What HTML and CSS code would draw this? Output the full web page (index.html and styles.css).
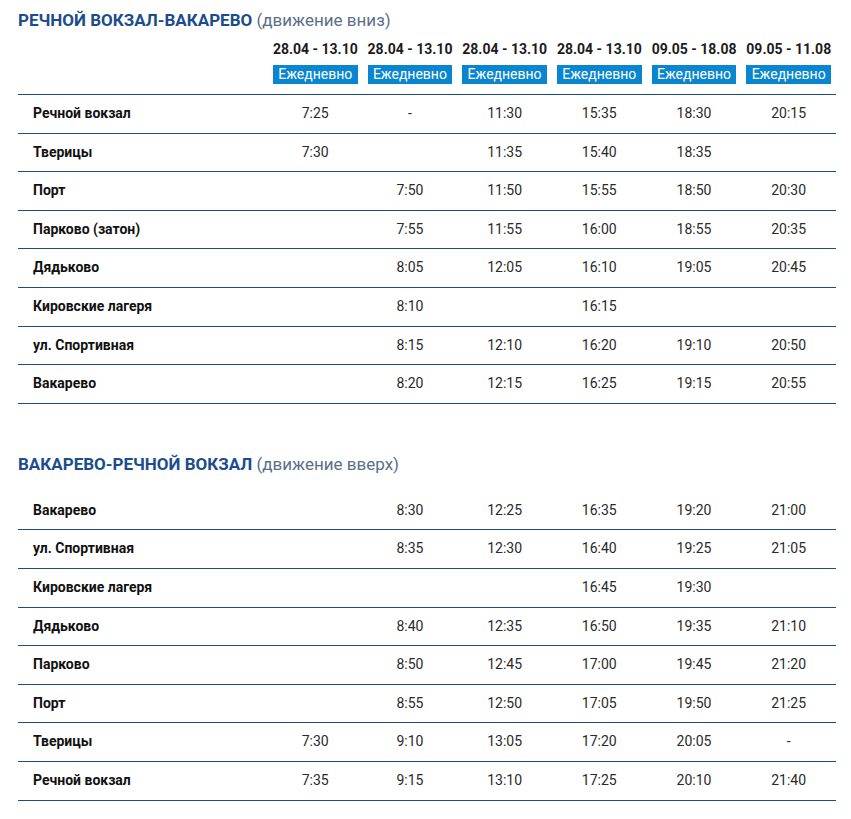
FILE: index.html
```
<!DOCTYPE html>
<html lang="ru">
<head>
<meta charset="utf-8">
<title>Расписание</title>
<link rel="stylesheet" href="styles.css">
</head>
<body>
<div class="page">
  <h2 class="route">РЕЧНОЙ ВОКЗАЛ-ВАКАРЕВО <span class="dir">(движение вниз)</span></h2>
  <table class="sched">
    <colgroup><col class="c-stop"><col><col><col><col><col><col></colgroup>
    <thead>
      <tr>
        <th class="stop"></th>
        <th><div class="date">28.04 - 13.10</div><div class="badge">Ежедневно</div></th>
        <th><div class="date">28.04 - 13.10</div><div class="badge">Ежедневно</div></th>
        <th><div class="date">28.04 - 13.10</div><div class="badge">Ежедневно</div></th>
        <th><div class="date">28.04 - 13.10</div><div class="badge">Ежедневно</div></th>
        <th><div class="date">09.05 - 18.08</div><div class="badge">Ежедневно</div></th>
        <th><div class="date">09.05 - 11.08</div><div class="badge">Ежедневно</div></th>
      </tr>
    </thead>
    <tbody>
      <tr><td class="stop">Речной вокзал</td><td>7:25</td><td>-</td><td>11:30</td><td>15:35</td><td>18:30</td><td>20:15</td></tr>
      <tr><td class="stop">Тверицы</td><td>7:30</td><td></td><td>11:35</td><td>15:40</td><td>18:35</td><td></td></tr>
      <tr><td class="stop">Порт</td><td></td><td>7:50</td><td>11:50</td><td>15:55</td><td>18:50</td><td>20:30</td></tr>
      <tr><td class="stop">Парково (затон)</td><td></td><td>7:55</td><td>11:55</td><td>16:00</td><td>18:55</td><td>20:35</td></tr>
      <tr><td class="stop">Дядьково</td><td></td><td>8:05</td><td>12:05</td><td>16:10</td><td>19:05</td><td>20:45</td></tr>
      <tr><td class="stop">Кировские лагеря</td><td></td><td>8:10</td><td></td><td>16:15</td><td></td><td></td></tr>
      <tr><td class="stop">ул. Спортивная</td><td></td><td>8:15</td><td>12:10</td><td>16:20</td><td>19:10</td><td>20:50</td></tr>
      <tr><td class="stop">Вакарево</td><td></td><td>8:20</td><td>12:15</td><td>16:25</td><td>19:15</td><td>20:55</td></tr>
    </tbody>
  </table>

  <h2 class="route second">ВАКАРЕВО-РЕЧНОЙ ВОКЗАЛ <span class="dir">(движение вверх)</span></h2>
  <table class="sched">
    <colgroup><col class="c-stop"><col><col><col><col><col><col></colgroup>
    <tbody>
      <tr><td class="stop">Вакарево</td><td></td><td>8:30</td><td>12:25</td><td>16:35</td><td>19:20</td><td>21:00</td></tr>
      <tr><td class="stop">ул. Спортивная</td><td></td><td>8:35</td><td>12:30</td><td>16:40</td><td>19:25</td><td>21:05</td></tr>
      <tr><td class="stop">Кировские лагеря</td><td></td><td></td><td></td><td>16:45</td><td>19:30</td><td></td></tr>
      <tr><td class="stop">Дядьково</td><td></td><td>8:40</td><td>12:35</td><td>16:50</td><td>19:35</td><td>21:10</td></tr>
      <tr><td class="stop">Парково</td><td></td><td>8:50</td><td>12:45</td><td>17:00</td><td>19:45</td><td>21:20</td></tr>
      <tr><td class="stop">Порт</td><td></td><td>8:55</td><td>12:50</td><td>17:05</td><td>19:50</td><td>21:25</td></tr>
      <tr><td class="stop">Тверицы</td><td>7:30</td><td>9:10</td><td>13:05</td><td>17:20</td><td>20:05</td><td>-</td></tr>
      <tr><td class="stop">Речной вокзал</td><td>7:35</td><td>9:15</td><td>13:10</td><td>17:25</td><td>20:10</td><td>21:40</td></tr>
    </tbody>
  </table>
</div>
</body>
</html>
```

FILE: styles.css
```
html, body {
  margin: 0;
  padding: 0;
  background: #ffffff;
}

body {
  font-family: Roboto, "Liberation Sans", Arial, sans-serif;
  font-size: 14px;
  color: #222222;
}

.page {
  padding: 8px 0 0 18px;
  width: 818px;
}

.route {
  margin: 0;
  font-size: 17px;
  line-height: 24px;
  font-weight: 700;
  color: #1b4c8c;
}

.route.second {
  margin-top: 48px;
}

.dir {
  font-weight: 400;
  color: #5b6f88;
}

.sched {
  width: 818px;
  border-collapse: collapse;
  table-layout: fixed;
}

.route.second + .sched {
  margin-top: 16px;
}

.sched col {
  width: 94.7px;
}

.sched col.c-stop {
  width: auto;
}

.sched th {
  padding: 7px 5px 10px;
  text-align: center;
  vertical-align: top;
  border-bottom: 1px solid #1e4d7b;
}

.date {
  font-size: 14px;
  line-height: 20px;
  font-weight: 700;
  color: #1c1c1c;
  white-space: nowrap;
}

.badge {
  margin-top: 6px;
  height: 19px;
  line-height: 19px;
  background: #0a86d1;
  color: #ffffff;
  font-size: 14px;
  font-weight: 400;
  text-align: center;
}

.sched td {
  padding: 10px 5px;
  line-height: 17.6px;
  text-align: center;
  color: #2a2a2a;
  border-bottom: 1px solid #1e4d7b;
}

.sched td.stop {
  text-align: left;
  padding-left: 15px;
  font-weight: 700;
  color: #111111;
}
```
